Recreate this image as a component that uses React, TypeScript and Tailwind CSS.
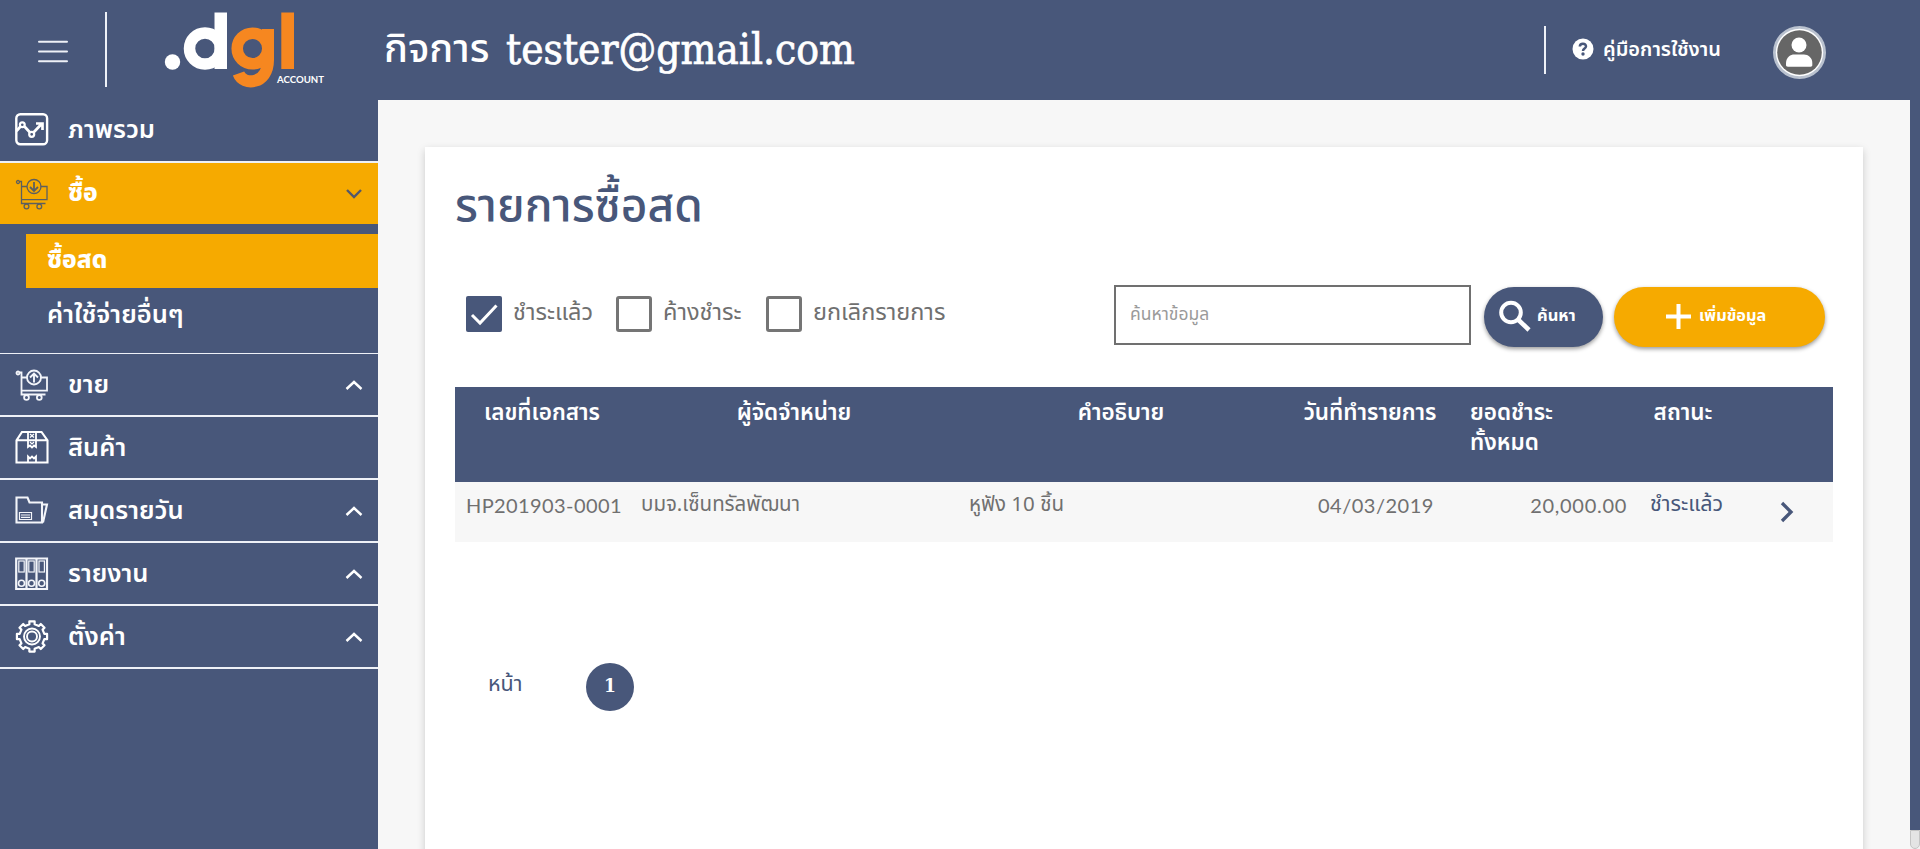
import React from "react";

type IconProps = { className?: string };

const Overview = ({ className }: IconProps) => (
  <svg className={className} width="34" height="34" viewBox="0 0 34 34" fill="none" stroke="#fff">
    <rect x="1.300" y="1.300" width="30.800" height="30" rx="4" strokeWidth="2.400" />
    <path d="M1.500 18 5.500 13.500M9.500 13.500l5.500 6M18.500 19.500l8.500-9M21 10.500H27.500V17" strokeWidth="2.700" />
    <circle cx="7.300" cy="11.800" r="2.400" strokeWidth="2.200" />
    <circle cx="16.700" cy="21.300" r="2.500" strokeWidth="2.200" />
  </svg>
);

const Cart = ({ down }: { down?: boolean }) => (
  <svg width="34" height="34" viewBox="0 0 34 34" fill="none" stroke={down ? "#5d5f5f" : "#f3f5fa"} strokeWidth={down ? 1.3 : 1.8}>
    <circle cx="3" cy="5" r="1.500" />
    <path d="M4.500 4.500H6.500V26.500H30.500M6.500 9.500H12M25.500 9.500H32V22.700H6.500" />
    <circle cx="19" cy="9.500" r="7" />
    {down ? <path d="M19 5V14M15 10l4 4 4-4" strokeWidth="1.800" /> : <path d="M19 14.500V5.500M15 9.500l4-4 4 4" strokeWidth="1.900" />}
    <circle cx="11.500" cy="29.500" r="2.400" />
    <circle cx="24.300" cy="29.500" r="2.400" />
  </svg>
);

const Box = () => (
  <svg width="34" height="34" viewBox="0 0 34 34" fill="none" stroke="#fff" strokeWidth="2.100">
    <path d="M1.500 9.300 7 1H26.500L32.500 9.300V31.500H1.500ZM1.500 9.300H32.500" />
    <path d="M13 1.500V16L15 14.500 17 16.500 19 14.500 21 16V1.500M13 31.500V25.500L15 27.500 17 25.500 19 27.500 21 25.500V31.500" strokeWidth="1.800" />
    <path d="M15 3l4 3.500M19 3l-4 3.500M15 11l2 2 2-2" strokeWidth="1.200" />
  </svg>
);

const Folder = () => (
  <svg width="34" height="34" viewBox="0 0 34 34" fill="none" stroke="#f3f5fa" strokeWidth="2.100">
    <path d="M1.500 3.500H12.500L14.500 8.500H27V28.500H1.500Z" />
    <path d="M27 10.500H32L28 28.500" />
    <path d="M4.500 18.500H16.500V25.500H4.500ZM6 21H15M6 23.300H15" strokeWidth="1.200" />
  </svg>
);

const Binders = () => (
  <svg width="34" height="34" viewBox="0 0 34 34" fill="none" stroke="#f3f5fa" strokeWidth="1.600">
    <path d="M1.200 1.500H32V32H1.200ZM11.500 1.500V32M21.500 1.500V32" strokeWidth="2.200" />
    {[6.5, 16.5, 26.700].map((x) => (
      <g key={x}>
        <rect x={x - 2.7} y="4" width="5.400" height="11" strokeWidth="1.200" />
        <circle cx={x} cy="26.300" r="3" />
      </g>
    ))}
  </svg>
);

const gearPath = Array.from({ length: 8 }, (_, i) =>
  [
    [-12, 12.6],
    [-10, 15.3],
    [10, 15.3],
    [12, 12.6],
  ]
    .map(([a, r]) => {
      const t = ((i * 45 + a) * Math.PI) / 180;
      return `${(17 + r * Math.sin(t)).toFixed(2)} ${(16.5 - r * Math.cos(t)).toFixed(2)}`;
    })
    .join("L")
).join("L");

const Gear = () => (
  <svg width="34" height="34" viewBox="0 0 34 34" fill="none" stroke="#fff">
    <path d={`M${gearPath}Z`} strokeWidth="2.200" strokeLinejoin="round" />
    <circle cx="17" cy="16.500" r="8" strokeWidth="1.900" />
    <circle cx="17" cy="16.500" r="5" strokeWidth="1.900" />
  </svg>
);

const Chevron = ({ down }: { down?: boolean }) => (
  <svg width="18" height="12" viewBox="0 0 18 12" fill="none" stroke={down ? "#52586c" : "#fff"} strokeWidth="2.400">
    {down ? <path d="M2 2l7 7 7-7" /> : <path d="M1.500 10 9 3l7.500 7" />}
  </svg>
);

const items = [
  { label: "ขาย", icon: <Cart />, chevron: true },
  { label: "สินค้า", icon: <Box />, chevron: false },
  { label: "สมุดรายวัน", icon: <Folder />, chevron: true },
  { label: "รายงาน", icon: <Binders />, chevron: true },
  { label: "ตั้งค่า", icon: <Gear />, chevron: true },
];

function Header() {
  return (
    <header className="flex h-[100px] shrink-0 items-start text-white">
      <svg className="ml-[37px] mt-[40px]" width="32" height="24" viewBox="0 0 32 24" stroke="#eef1f7" strokeWidth="2" strokeLinecap="round">
        <path d="M2 1.700H30M2 11.500H30M2 21.200H30" />
      </svg>
      <div className="ml-[36px] mt-3 h-[75px] w-[2px] bg-[#eef1f7]" />
      <svg className="ml-[57px] mt-2" width="164" height="82" viewBox="164 8 164 82" fill="none">
        <circle cx="172.500" cy="62" r="7.700" fill="#fff" />
        <circle cx="205" cy="48.500" r="15.500" stroke="#fff" strokeWidth="11.500" />
        <path d="M214.500 12.500H227V69H214.500Z" fill="#fff" />
        <circle cx="252.500" cy="48.500" r="15.300" stroke="#f68720" strokeWidth="11.500" />
        <path d="M268 29V60C268 85 243 86 238.500 73.500" stroke="#f68720" strokeWidth="12" />
        <path d="M281.300 12.500H294V69H281.300Z" fill="#f68720" />
        <text x="277" y="82.500" fill="#fff" fontSize="9.800" fontWeight="700" textLength="47" lengthAdjust="spacingAndGlyphs" fontFamily="Lato, sans-serif">ACCOUNT</text>
      </svg>
      <h1 className="ml-[56px] mt-[22px] flex h-[56px] items-center text-[39.500px] font-medium leading-[56px]">
        <span className="w-[122px] whitespace-nowrap">กิจการ</span>
        <span className="whitespace-nowrap text-[42px] font-normal leading-[50px] [-webkit-text-stroke:0.7px_#fff] [font-family:'DejaVu_Serif_Condensed','DejaVu_Serif',serif] [font-stretch:condensed]">tester@gmail.com</span>
      </h1>
      <div className="ml-auto mr-[94px] flex">
        <div className="mt-[26px] h-[48px] w-[2px] bg-[#eef1f7]" />
        <svg className="ml-[26px] mt-[38px]" width="22" height="22" viewBox="0 0 22 22">
          <circle cx="11" cy="11" r="10.500" fill="#fff" />
          <path d="M7.800 8.500C8 4.500 14.300 5 14 8.500 13.800 10.700 11 10.500 11 13" fill="none" stroke="#48577a" strokeWidth="2.500" />
          <circle cx="11" cy="16" r="1.700" fill="#48577a" />
        </svg>
        <span className="ml-[9px] mt-[34px] w-[119px] whitespace-nowrap text-[20px] font-semibold leading-[32px]">คู่มือการใช้งาน</span>
        <svg className="ml-[51px] mt-[26px]" width="53" height="53" viewBox="0 0 53 53">
          <circle cx="26.500" cy="26.500" r="26.500" fill="#bac2cf" />
          <circle cx="26.500" cy="26.500" r="23.700" fill="#fff" />
          <circle cx="26.500" cy="26.500" r="22.300" fill="#666" />
          <circle cx="26" cy="19" r="7.500" fill="#fff" />
          <path d="M13 37C13 31 18 28.500 21 28.500H31C35 28.500 39.300 31.500 39.300 37V39C39.300 40 38.800 40.700 37.500 40.700H15C13.500 40.700 13 40 13 39Z" fill="#fff" />
        </svg>
      </div>
    </header>
  );
}

function Sidebar() {
  return (
    <nav className="flex w-[378px] shrink-0 flex-col whitespace-nowrap text-[25.500px] font-semibold text-white">
      <div className="flex h-[63px] items-center border-b-2 border-[#eef1f7] pb-[2px] pl-[15px]">
        <Overview />
        <span className="ml-[19px] leading-10">ภาพรวม</span>
      </div>
      <div className="flex h-[61px] items-center bg-[#f6aa00] pl-[15px] pr-[15px]">
        <Cart down />
        <span className="ml-[19px] text-[24.500px] font-extrabold leading-10">ซื้อ</span>
        <span className="ml-auto"><Chevron down /></span>
      </div>
      <div className="flex h-[130px] flex-col border-b border-[#eef1f7] pt-[10px]">
        <div className="ml-[26px] flex h-[54px] items-center bg-[#f6aa00] pl-[21px] text-[24.500px] font-extrabold">ซื้อสด</div>
        <div className="ml-[47px] flex h-[54px] items-center">ค่าใช้จ่ายอื่นๆ</div>
      </div>
      {items.map((it) => (
        <div key={it.label} className="flex h-[63px] items-center border-b-2 border-[#eef1f7] pl-[15px] pr-[15px]">
          {it.icon}
          <span className="ml-[19px] leading-10">{it.label}</span>
          {it.chevron && <span className="ml-auto"><Chevron /></span>}
        </div>
      ))}
    </nav>
  );
}

function Check({ label, checked }: { label: string; checked?: boolean }) {
  return (
    <label className="flex w-[150px] items-start">
      {checked ? (
        <svg className="shrink-0" width="36" height="36" viewBox="0 0 36 36"><rect width="36" height="36" rx="2" fill="#48577a" /><path d="M6 19l8 8L30.500 9.500" fill="none" stroke="#fff" strokeWidth="3" /></svg>
      ) : (
        <span className="h-[36px] w-[36px] shrink-0 rounded-[3px] border-[3px] border-[#757575]" />
      )}
      <span className="ml-[11px] whitespace-nowrap text-[23.500px] leading-[34px] text-[#707070]">{label}</span>
    </label>
  );
}

export default function App() {
  return (
    <div className="flex h-[849px] w-[1920px] flex-col overflow-hidden bg-[#48577a] [font-family:'Noto_Sans_Thai','Lato','Noto_Sans',sans-serif]">
      <Header />
      <div className="flex min-h-0 flex-1">
        <Sidebar />
        <main className="flex flex-1 bg-[#f7f7f7] pl-[47px] pr-[47px] pt-[47px]">
          <section className="h-[760px] w-[1438px] bg-white pl-[30px] pt-[22px] shadow-[0_3px_8px_rgba(0,0,0,0.18)]">
            <h2 className="h-[116px] text-[46px] font-medium leading-[76px] text-[#48577a]">รายการซื้อสด</h2>
            <div className="flex h-[102px] items-start pl-[11px]">
              <div className="flex w-[648px] shrink-0 pt-[11px]">
                <Check label="ชำระแล้ว" checked />
                <Check label="ค้างชำระ" />
                <Check label="ยกเลิกรายการ" />
              </div>
              <div className="flex h-[60px] w-[357px] items-center border-2 border-[#707070] pl-[14px] text-[17.500px] text-[#9a9a9a]">ค้นหาข้อมูล</div>
              <button className="ml-[13px] mt-[2px] flex h-[60px] w-[119px] items-center rounded-full bg-[#48577a] pb-[2px] pl-[14px] text-[16.500px] font-bold text-white shadow-[0_2px_4px_rgba(0,0,0,0.4)]">
                <svg width="34" height="34" viewBox="0 0 34 34" fill="none" stroke="#fff"><circle cx="13" cy="13.500" r="9.800" strokeWidth="4" /><path d="M20 20.500 31 31" strokeWidth="4.500" /></svg>
                <span className="ml-[5px]">ค้นหา</span>
              </button>
              <button className="ml-[11px] mt-[2px] flex h-[60px] w-[211px] items-center rounded-full bg-[#f6aa00] pb-[2px] pl-[52px] text-[16.300px] font-bold text-white shadow-[0_2px_4px_rgba(0,0,0,0.4)]">
                <svg width="25" height="25" viewBox="0 0 25 25" stroke="#fff" strokeWidth="4"><path d="M12.500 0V25M0 12.500H25" /></svg>
                <span className="ml-[8px]">เพิ่มข้อมูล</span>
              </button>
            </div>
            <div className="w-[1378px] whitespace-nowrap">
              <div className="flex h-[95px] bg-[#48577a] pt-[11px] text-[22.500px] font-semibold leading-[30px] text-white">
                <div className="w-[174px] text-center">เลขที่เอกสาร</div>
                <div className="w-[330px] text-center">ผู้จัดจำหน่าย</div>
                <div className="w-[324px] text-center">คำอธิบาย</div>
                <div className="w-[174px] text-center">วันที่ทำรายการ</div>
                <div className="w-[166px] pl-[13px]">ยอดชำระ<br />ทั้งหมด</div>
                <div className="w-[120px] text-center">สถานะ</div>
              </div>
              <div className="flex h-[60px] bg-[#f7f7f7] pt-[8px] text-[20.500px] leading-[30px] text-[#707070]">
                <div className="w-[174px] pl-[11px] text-[20px] tracking-[0.4px] [font-family:'Lato',sans-serif]">HP201903-0001</div>
                <div className="w-[327px] pl-[12px]">บมจ.เซ็นทรัลพัฒนา</div>
                <div className="w-[327px] pl-[13px]">หูฟัง 10 ชิ้น</div>
                <div className="w-[174px] pl-[35px] text-[20px] tracking-[0.5px] [font-family:'Lato',sans-serif]">04/03/2019</div>
                <div className="w-[170px] pr-[0px] text-right text-[20px] tracking-[0.7px] [font-family:'Lato',sans-serif]">20,000.00</div>
                <div className="w-[120px] pl-[23px] text-[21.500px] text-[#48577a]">ชำระแล้ว</div>
                <svg className="ml-[32px] mt-[11px]" width="16" height="22" viewBox="0 0 16 22" fill="none" stroke="#48577a" strokeWidth="3.300"><path d="M3 2l9 9-9 9" /></svg>
              </div>
            </div>
            <div className="mt-[121px] flex items-center text-[#48577a]">
              <span className="-mt-[3px] w-[131px] pl-[33px] text-[21.500px]">หน้า</span>
              <span className="flex h-[48px] w-[48px] items-center justify-center rounded-full bg-[#48577a] pb-[4px] text-[19px] font-bold text-white [font-family:'DejaVu_Serif_Condensed','DejaVu_Serif',serif] [font-stretch:condensed]">1</span>
            </div>
          </section>
        </main>
        <div className="flex w-[10px] flex-col justify-end">
          <div className="h-[19px] bg-[#f3f3f3]"><div className="h-full rounded-b-full border border-[#c4c4c4] bg-[#e4e4e4]" /></div>
        </div>
      </div>
    </div>
  );
}
